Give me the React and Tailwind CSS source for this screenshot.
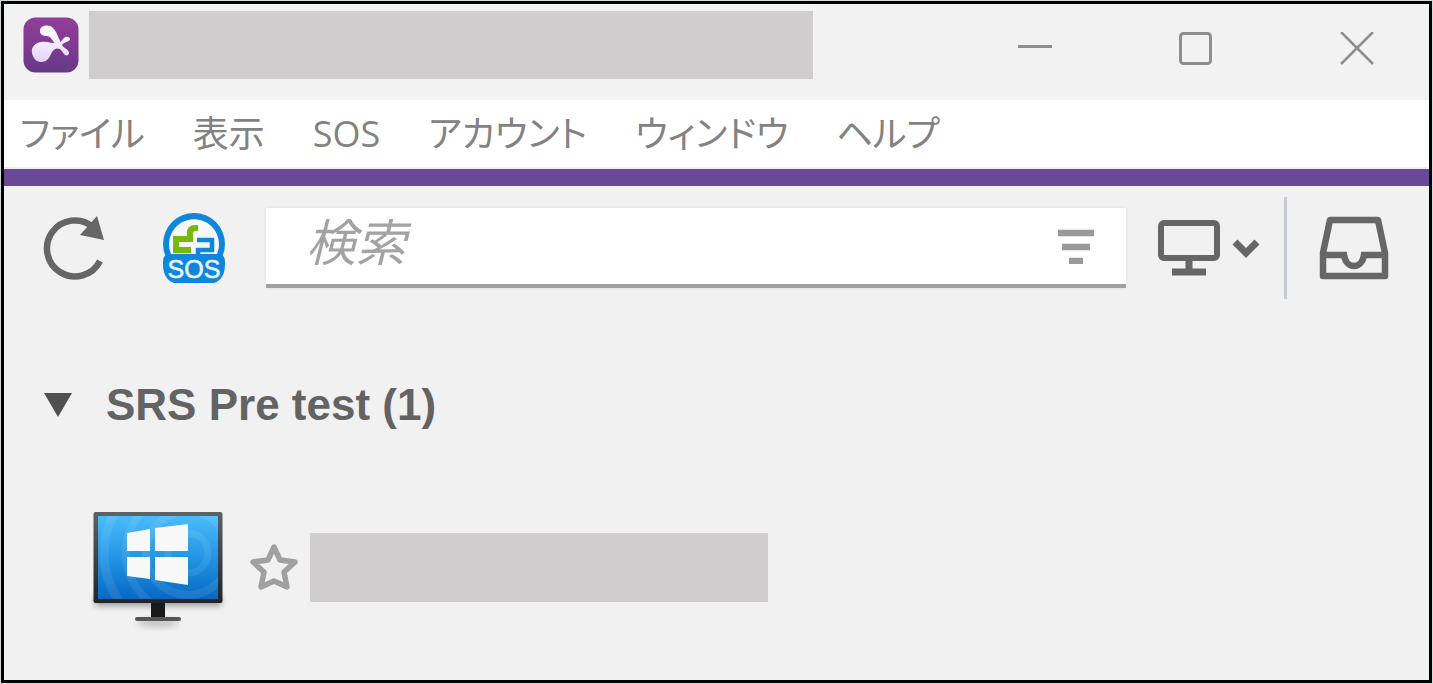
import React from 'react';

const menuItems = ['ファイル', '表示', 'SOS', 'アカウント', 'ウィンドウ', 'ヘルプ'];

const AppLogo = () => (
  <svg viewBox="0 0 56 56" className="w-14 h-14 shrink-0" aria-hidden="true">
    <defs>
      <linearGradient id="logo-bg" x1="0" y1="0" x2="0" y2="1">
        <stop offset="0" stopColor="#8f3f98" />
        <stop offset="0.5" stopColor="#813a92" />
        <stop offset="1" stopColor="#653a86" />
      </linearGradient>
      <linearGradient id="logo-drop" gradientUnits="userSpaceOnUse" x1="0" y1="10" x2="0" y2="44">
        <stop offset="0" stopColor="#ffffff" />
        <stop offset="1" stopColor="#e3d5fb" />
      </linearGradient>
    </defs>
    <rect x="0.5" y="0.5" width="55" height="55" rx="12" fill="url(#logo-bg)" />
    <g fill="url(#logo-drop)">
      <path d="M17 14c0-6 9-7 13-3 5 5 5 11 9 16l-4 5c-4-6-6-12-11-13-4 0-7-1-7-5z" />
      <path d="M9 36c-1-6 3-10 9-11 7-1 11 2 17 1l3 5c-6 0-8 2-10 6-2 5-5 8-10 8-5 0-8-4-9-9z" />
      <path d="M34 27c4-1 4-3 6-5 3-4 7-2 7 0 0 3-5 2-8 6 1 3 7 4 7 8 0 3-4 3-5 1-2-3-3-5-7-6z" />
    </g>
  </svg>
);

const RefreshIcon = () => (
  <svg viewBox="0 0 64 64" className="w-16 h-16" aria-hidden="true">
    <path d="M51 11A28 28 0 1 0 58 45" fill="none" stroke="#666" strokeWidth="6.5" />
    <path d="M55 0l7 24-24-5z" fill="#666" />
  </svg>
);

const SosIcon = () => (
  <svg viewBox="0 0 64 72" className="w-16 h-18" aria-hidden="true">
    <circle cx="32" cy="32" r="31" fill="#0d86dc" />
    <path d="M4 43c-3 2-3 5-3 9 0 10 4 17 11 19h40c7-2 11-9 11-19 0-4 0-7-3-9z" fill="#0d86dc" />
    <path d="M9 42a25 25 0 1 1 46 0z" fill="#f6f8fa" />
    <path d="M36 16h-3q-5 0-5 5v6H14v11H29" fill="none" stroke="#76b80d" strokeWidth="6" />
    <path d="M35 28h15v10H36v4" fill="none" stroke="#0d86dc" strokeWidth="4.5" />
    <text
      x="32"
      y="66"
      textAnchor="middle"
      fontFamily="Liberation Sans, sans-serif"
      fontSize="25"
      fill="#e6f4fd"
      stroke="#e6f4fd"
      strokeWidth="0.6"
    >
      SOS
    </text>
  </svg>
);

const FilterIcon = () => (
  <svg viewBox="0 0 36 36" className="w-9 h-9" aria-hidden="true">
    <path d="M0 5h36M4 19h28M11 33h14" stroke="#999" strokeWidth="6.5" />
  </svg>
);

const MonitorIcon = () => (
  <svg viewBox="0 0 62 56" className="w-[62px] h-14" aria-hidden="true">
    <rect x="3" y="3" width="56" height="35" rx="3" fill="none" stroke="#666" strokeWidth="6" />
    <path d="M31 38v12M14 52h34" stroke="#666" strokeWidth="7" />
  </svg>
);

const InboxIcon = () => (
  <svg viewBox="0 0 70 64" className="w-[70px] h-16" aria-hidden="true">
    <g fill="none" stroke="#666" strokeWidth="6.5" strokeLinejoin="round">
      <path d="M11 4h48l7 33v23H4V37z" />
      <path d="M4 39h21c1 7 5 11 10 11s9-4 10-11h21" strokeLinejoin="miter" />
    </g>
  </svg>
);

const StarIcon = () => (
  <svg viewBox="0 0 48 48" className="w-12 h-12" aria-hidden="true">
    <path
      d="M24 4l6 13 15 2-11 10 3 15-13-6-13 6 3-15L3 19l15-2z"
      fill="none"
      stroke="#a0a0a0"
      strokeWidth="5.500"
      strokeLinejoin="round"
    />
  </svg>
);

const ComputerIcon = () => (
  <svg viewBox="0 0 132 112" className="w-[132px] h-28 shrink-0 overflow-visible" aria-hidden="true">
    <defs>
      <linearGradient id="screen" x1="0" y1="0" x2="0" y2="1">
        <stop offset="0" stopColor="#4bbcfb" />
        <stop offset="0.5" stopColor="#2395e3" />
        <stop offset="1" stopColor="#0868c4" />
      </linearGradient>
      <linearGradient id="frame" x1="0" y1="0" x2="0" y2="1">
        <stop offset="0" stopColor="#5c6265" />
        <stop offset="1" stopColor="#202428" />
      </linearGradient>
      <clipPath id="screen-clip">
        <rect x="6" y="5" width="120" height="83" />
      </clipPath>
      <filter id="soft" x="-20%" y="-50%" width="140%" height="200%">
        <feGaussianBlur stdDeviation="3" />
      </filter>
    </defs>
    <rect x="3" y="84" width="126" height="11" fill="#000" opacity="0.35" filter="url(#soft)" />
    <ellipse cx="66" cy="112" rx="21" ry="4" fill="#000" opacity="0.2" filter="url(#soft)" />
    <rect x="1.500" y="1" width="129" height="91" rx="2" fill="url(#frame)" />
    <rect x="6" y="5" width="120" height="83" fill="url(#screen)" />
    <g clipPath="url(#screen-clip)" fill="none" stroke="#fff" opacity="0.08">
      <circle cx="96" cy="42" r="20" strokeWidth="7" />
      <circle cx="96" cy="42" r="42" strokeWidth="8" />
      <circle cx="96" cy="42" r="62" strokeWidth="8" />
      <circle cx="96" cy="42" r="84" strokeWidth="9" />
    </g>
    <path d="M35 22l23-4v22H35zM63 17l33-4v27H63zM35 46h23v22l-23-3zM63 46h33v28l-33-5z" fill="#f8f8f8" />
    <rect x="59" y="92" width="14" height="16" fill="#17191b" />
    <rect x="43" y="106" width="46" height="4" rx="2" fill="#555" />
  </svg>
);

const TitleBar = () => (
  <header className="flex items-start justify-between h-24 pl-[19px] pr-[55px] bg-[#f2f2f2]">
    <div className="flex flex-1 items-center gap-2.5 pt-[7px]">
      <AppLogo />
      <div className="w-full max-w-[724px] h-[68px] bg-[#d0cdce]" />
    </div>
    <div className="flex gap-[127px] pt-7">
      <button type="button" aria-label="最小化">
        <svg viewBox="0 0 34 34" className="w-[34px] h-[34px]" aria-hidden="true">
          <path d="M0 14.500h34" stroke="#8e8e8e" strokeWidth="3" />
        </svg>
      </button>
      <button type="button" aria-label="最大化">
        <svg viewBox="0 0 34 34" className="w-[34px] h-[34px]" aria-hidden="true">
          <rect x="1.500" y="1.500" width="30" height="30" rx="3" fill="none" stroke="#8e8e8e" strokeWidth="3" />
        </svg>
      </button>
      <button type="button" aria-label="閉じる">
        <svg viewBox="0 0 34 34" className="w-[34px] h-[34px]" aria-hidden="true">
          <path d="M1 0l32 32M33 0L1 32" stroke="#8e8e8e" strokeWidth="2.500" />
        </svg>
      </button>
    </div>
  </header>
);

const MenuBar = () => (
  <nav className="flex items-center gap-12 h-[69px] pl-4 bg-white border-b-2 border-[#efefef] text-4xl text-[#828282] font-['Open_Sans','Noto_Sans_CJK_JP',sans-serif] [font-feature-settings:'palt']">
    {menuItems.map((item) => (
      <button key={item} type="button" className="whitespace-nowrap">
        {item}
      </button>
    ))}
  </nav>
);

const Toolbar = () => (
  <div className="flex items-center h-[124px] pl-[38px] pr-10">
    <button type="button" aria-label="更新">
      <RefreshIcon />
    </button>
    <button type="button" aria-label="SOS" className="ml-14">
      <SosIcon />
    </button>
    <div className="flex flex-1 items-center h-20 ml-10 pl-10 pr-8 bg-white border-b-4 border-[#a0a0a0] shadow-[0_0_3px_#ddd]">
      <input
        type="text"
        aria-label="検索"
        placeholder="検索"
        className="flex-1 min-w-0 pb-1 text-[50px] leading-[64px] italic outline-none placeholder:text-[#a3a3a3]"
      />
      <button type="button" aria-label="フィルター">
        <FilterIcon />
      </button>
    </div>
    <button type="button" aria-label="モニター" className="flex items-center gap-3 ml-8">
      <MonitorIcon />
      <svg viewBox="0 0 28 20" className="w-7 h-5" aria-hidden="true">
        <path d="M3 4l11 11L25 4" fill="none" stroke="#666" strokeWidth="7" />
      </svg>
    </button>
    <div className="w-[3px] h-[102px] ml-6 bg-[#c5cad0]" />
    <button type="button" aria-label="受信トレイ" className="ml-8">
      <InboxIcon />
    </button>
  </div>
);

const ComputerList = () => (
  <main className="pt-[63px] pb-14">
    <button type="button" className="flex items-center gap-[34px] h-16 pl-10 text-[44px] font-bold text-[#636363]">
      <svg viewBox="0 0 28 24" className="w-7 h-6" aria-hidden="true">
        <path d="M0 0h28L14 24z" fill="#505050" />
      </svg>
      SRS Pre test (1)
    </button>
    <div className="flex items-center mt-[74px] pl-[88px]">
      <ComputerIcon />
      <button type="button" aria-label="お気に入り" className="ml-[26px]">
        <StarIcon />
      </button>
      <div className="w-full max-w-[458px] h-[69px] ml-3 bg-[#d0cdce]" />
    </div>
  </main>
);

const App = () => {
  return (
    <div className="p-px min-h-screen flex flex-col bg-[#d5dbd5] font-['Liberation_Sans','Noto_Sans_CJK_JP',sans-serif]">
      <div className="flex-1 border-3 border-black bg-[#f1f1f1]">
        <TitleBar />
        <MenuBar />
        <div className="h-[17px] bg-[#6a4898]" />
        <Toolbar />
        <ComputerList />
      </div>
    </div>
  );
};

export default App;
